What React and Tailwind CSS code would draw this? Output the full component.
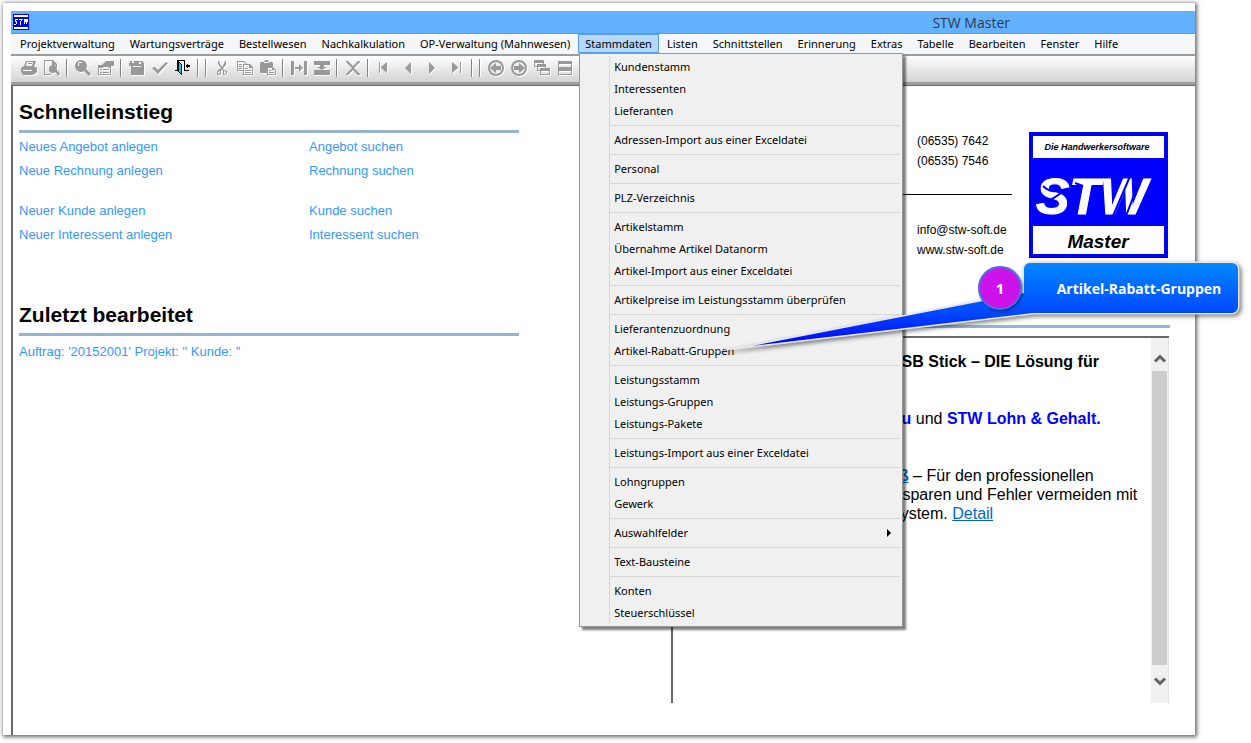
import { useState } from 'react'
import clsx from 'clsx'

const MENUS = [
  'Projektverwaltung', 'Wartungsverträge', 'Bestellwesen', 'Nachkalkulation',
  'OP-Verwaltung (Mahnwesen)', 'Stammdaten', 'Listen', 'Schnittstellen', 'Erinnerung',
  'Extras', 'Tabelle', 'Bearbeiten', 'Fenster', 'Hilfe',
]

const STAMMDATEN = [
  ['Kundenstamm', 'Interessenten', 'Lieferanten'],
  ['Adressen-Import aus einer Exceldatei'],
  ['Personal'],
  ['PLZ-Verzeichnis'],
  ['Artikelstamm', 'Übernahme Artikel Datanorm', 'Artikel-Import aus einer Exceldatei'],
  ['Artikelpreise im Leistungsstamm überprüfen'],
  ['Lieferantenzuordnung', 'Artikel-Rabatt-Gruppen'],
  ['Leistungsstamm', 'Leistungs-Gruppen', 'Leistungs-Pakete'],
  ['Leistungs-Import aus einer Exceldatei'],
  ['Lohngruppen', 'Gewerk'],
  ['Auswahlfelder'],
  ['Text-Bausteine'],
  ['Konten', 'Steuerschlüssel'],
]

const ICONS = {
  print: (
    <path fillRule="evenodd" d="M5 1h10l-2 6h2l1 1v4l-2 2h-1l-1 1H2l-2-3V8l3-2zM6 2L5 6h6l1-4zM7 3h4v1H7zM2 10v1h9v-1z" />
  ),
  preview: (
    <>
      <path fillRule="evenodd" d="M0 0h9l4 4v3h-1V5H8V1H1v13h6v1H0z" />
      <circle cx="9" cy="9" r="4" />
      <path d="M11 11l2-1 3 4-2 2z" />
    </>
  ),
  search: (
    <>
      <path fillRule="evenodd" d="M6 0a6 6 0 100 12A6 6 0 006 0zM4 2h3v1H4v3H3V3z" />
      <path d="M9 11l2-2 5 5-2 2z" />
    </>
  ),
  properties: (
    <path fillRule="evenodd" d="M0 5h4l4-4h8v5h-3v9H0zm1 3v6h11V8l-3-1H6L4 8zm1 1h2v1H2zm3 0h6v1H5zm-3 3h2v1H2zm3 0h6v1H5z" />
  ),
  save: (
    <path fillRule="evenodd" d="M1 1h2v2h2V1h8l2 2v12H2V6H0V3h1zm9 1v2h2V2zM4 6v1h8V6z" />
  ),
  check: <path d="M0 8l3-1 3 3 8-8 2 1L6 14z" />,
  cut: (
    <path fillRule="evenodd" d="M4 1h1l1 3 2 3 2-3 1-3h1v4L9 8l1 2 3 1v3l-2 1H9v-4L8 9l-1 2v3l-2 1H3v-3l1-2 2-1 1-1-3-4zM4 12v2l2-1v-2zm6-1v3h2v-2z" />
  ),
  copy: (
    <path fillRule="evenodd" d="M0 1h7l3 3h3l3 3v8H6v-4H0zm1 1v8h5V4h3L6 2zm6 3v9h8V8h-3V5zM2 4h3v1H2zm0 2h3v1H2zm0 2h3v1H2zm6 0h3v1H8zm0 2h6v1H8zm0 2h6v1H8z" />
  ),
  paste: (
    <path fillRule="evenodd" d="M0 3l1-1h3l1-2h3l1 2h3l1 1v4l3 3v5H7v-2H1l-1-1zm4 0h5V2H4zm4 5v6h7v-4h-3V8zm1 2h2v1H9zm0 2h5v1H9z" />
  ),
  indent: <path d="M0 1h3v14H0zM13 1h3v14h-3zM4 7h4V4l4 4-4 4V9H4z" />,
  merge: <path d="M0 1h16v4h-6v2h3l-5 3-5-3h3V5H0zM0 10h16v5H0z" />,
  remove: <path d="M1 1h2l5 5 5-5h2v1L9 8l6 6v1h-2L8 10l-5 5H1v-1l6-6-6-6z" />,
  first: <path d="M3 2h1v11H3zM11 2v11L5 8V7z" />,
  prev: <path d="M11 2v12L5 8z" />,
  next: <path d="M5 2v12l6-6z" />,
  last: <path d="M12 2h1v11h-1zM4 2v11l6-5V7z" />,
  back: (
    <>
      <circle cx="8" cy="8" r="8" />
      <circle cx="8" cy="8" r="6" fill="#ededed" />
      <path d="M2 8l6-5v3h5v4H8v3z" />
    </>
  ),
  forward: (
    <>
      <circle cx="8" cy="8" r="8" />
      <circle cx="8" cy="8" r="6" fill="#ededed" />
      <path d="M14 8L8 3v3H3v4h5v3z" />
    </>
  ),
  cascade: (
    <path fillRule="evenodd" d="M0 0h10v4h2v4h4v7H6v-4H3V7H0zm1 3v3h2V4h6V3zm3 4v3h2V8h5V7zm3 4v3h8v-3z" />
  ),
  tile: <path fillRule="evenodd" d="M1 1h14v14H1zm1 3v3h12V4zm0 7v3h12v-3z" />,
  split: <path fillRule="evenodd" d="M1 1h6v14H1zm1 3v10h4V4zM9 1h6v14H9zm1 3v10h4V4z" />,
}

const TOOLS = [
  ['print', 'preview'],
  ['search', 'properties'],
  ['save', 'check', 'door'],
  [],
  ['cut', 'copy', 'paste'],
  ['indent', 'merge'],
  ['remove'],
  ['first', 'prev', 'next', 'last'],
  [],
  ['back', 'forward', 'cascade', 'tile', 'split'],
]

function DoorIcon() {
  return (
    <svg width="16" height="16" viewBox="0 0 16 16" shapeRendering="crispEdges">
      <path fill="#fff" d="M2 1h7v10H2z" />
      <path d="M2 0h8v11H9V1H3v10H2zM0 10h3v1H0zM9 10h5v1H9z" />
      <path fill="#00d8e8" stroke="#000" d="M3.500 1.500l3 3v10l-3-3z" />
      <path d="M10 6l3-3v2h2v2h-2v2z" />
    </svg>
  )
}

function ToolButton({ name }) {
  const isNav = ['first', 'prev', 'next', 'last'].includes(name)
  return (
    <button aria-label={name} className={clsx('flex h-6 items-center justify-center', isNav ? 'w-6' : 'w-[23px]')}>
      {name === 'door' ? (
        <DoorIcon />
      ) : (
        <svg width="16" height="16" viewBox="0 0 16 16" fill="#999" className="drop-shadow-[1px_1px_0_#fff]">
          {ICONS[name]}
        </svg>
      )}
    </button>
  )
}

function AppIcon() {
  return (
    <svg width="16" height="16" viewBox="0 0 16 16" shapeRendering="crispEdges">
      <path fill="#0000e6" d="M0 0h16v16H0z" />
      <path fill="#fff" d="M1 1h14v2H1zM1 13h14v2H1z" />
      <path stroke="#fff" fill="none" d="M5 5.500H3L2 7l2 1-1 2H1M6 5.500h4M8.500 5L7 11M11 5v5l2-5v5l2-5" />
    </svg>
  )
}

function Logo() {
  return (
    <svg width="139" height="126" viewBox="0 0 139 126" className="mt-px shrink-0" role="img" aria-label="STW Master">
      <path fill="#00f" d="M0 0h139v126H0z" />
      <path fill="#fff" d="M4 4h131v22H4zM4 94h131v28H4z" />
      <g fontFamily="Liberation Sans, Arial, sans-serif" fontWeight="700" fontStyle="italic">
        <text x="68" y="18" fontSize="9" textAnchor="middle">Die Handwerkersoftware</text>
        <text x="7" y="82" fontSize="50" fill="#fff" stroke="#fff">STW</text>
        <text x="69" y="116" fontSize="19" textAnchor="middle">Master</text>
      </g>
      <path stroke="#00f" strokeWidth="2" fill="none" d="M8 69c10 2 16-2 24-8M14 54c6 6 12 6 22 4M46 51l8 3M84 84l18-42M97 84l16-42" />
    </svg>
  )
}

function Dropdown() {
  return (
    <div
      role="menu"
      className="absolute left-px top-full z-10 w-[324px] border border-[#979797] bg-[#f0f0f0] py-0.5 shadow-[3px_3px_2px_#00000080]"
    >
      {STAMMDATEN.map((group, i) => (
        <div key={group[0]} className="ml-[29px] mr-0.5 border-l border-[#d7d7d7]">
          {i > 0 && <div className="flex h-[7px] items-center"><div className="h-px w-full bg-[#d7d7d7]" /></div>}
          {group.map(item => (
            <button
              key={item}
              role="menuitem"
              className="flex h-[22px] w-full items-center justify-between whitespace-nowrap pl-1 pr-2 text-left"
            >
              {item}
              {item === 'Auswahlfelder' && (
                <svg width="5" height="8" viewBox="0 0 5 8"><path d="M0 0l4 4-4 4z" /></svg>
              )}
            </button>
          ))}
        </div>
      ))}
    </div>
  )
}

function MenuBar() {
  const [open, setOpen] = useState('Stammdaten')
  return (
    <nav className="flex h-5 items-start gap-px bg-[#f5f6f7] pl-0.5 font-['Noto_Sans','Open_Sans',sans-serif] text-[11px] text-black">
      {MENUS.map(name => (
        <div key={name} className="relative">
          <button
            onClick={() => setOpen(open === name ? null : name)}
            className={clsx(
              'block h-[19px] whitespace-nowrap border px-[6px] pt-px',
              open === name ? 'border-[#569de5] bg-[#b5d7fb]' : 'border-transparent',
            )}
          >
            {name}
          </button>
          {open === name && name === 'Stammdaten' && <Dropdown />}
        </div>
      ))}
    </nav>
  )
}

function Toolbar() {
  return (
    <div className="flex h-[31px] items-center border-b-[3px] border-t-2 border-[#9c9c9c] bg-linear-to-b from-white to-[#d3d3d3] pb-0.5 pl-[6px]">
      {TOOLS.map((group, i) => (
        <div key={i} className="flex items-center">
          {i > 0 && <div className="mx-[3px] h-[18px] w-0.5 border-r border-white bg-[#858585]" />}
          {group.map(name => <ToolButton key={name} name={name} />)}
        </div>
      ))}
    </div>
  )
}

function Heading({ children }) {
  return <h2 className="border-b-[3px] border-[#99b4d1] pb-1.5 text-[21px] leading-6 font-bold text-black">{children}</h2>
}

function QuickStart() {
  return (
    <section>
      <Heading>Schnelleinstieg</Heading>
      <div className="mt-0.5 grid grid-cols-[290px_1fr] text-[13px] leading-6 text-[#3399ff]">
        <a href="#angebot">Neues Angebot anlegen</a>
        <a href="#angebote">Angebot suchen</a>
        <a href="#rechnung">Neue Rechnung anlegen</a>
        <a href="#rechnungen">Rechnung suchen</a>
        <a href="#kunde" className="mt-4">Neuer Kunde anlegen</a>
        <a href="#kunden" className="mt-4">Kunde suchen</a>
        <a href="#interessent">Neuer Interessent anlegen</a>
        <a href="#interessenten">Interessent suchen</a>
      </div>
    </section>
  )
}

function Recent() {
  return (
    <section>
      <Heading>Zuletzt bearbeitet</Heading>
      <a href="#auftrag" className="mt-1 block text-[13px] leading-6 text-[#3399ff]">
        Auftrag: '20152001' Projekt: '' Kunde: ''
      </a>
    </section>
  )
}

function Contact() {
  return (
    <div className="flex h-[197px] justify-end gap-[17px] border-b-[3px] border-[#99b4d1] pr-0.5">
      <div className="w-[120px] text-[12px] leading-5 text-black">
        <p className="pl-[25px]">(06535) 7642<br />(06535) 7546</p>
        <p className="mt-[23px] border-t border-black pl-[25px] pt-[25px]">info@stw-soft.de<br />www.stw-soft.de</p>
      </div>
      <Logo />
    </div>
  )
}

function News() {
  return (
    <div className="mr-px mt-2 flex h-[367px] border-l-2 border-t-2 border-[#696969] text-[16px] leading-[19px] text-black">
      <div className="flex-1 overflow-hidden whitespace-nowrap pl-[217px] pt-[14px]">
        <p className="mb-[38px] font-bold">USB Stick – DIE Lösung für</p>
        <p className="mb-[38px]">
          <b className="text-[#0000ff]">Bu</b> und <b className="text-[#0000ff]">STW Lohn &amp; Gehalt.</b>
        </p>
        <p>
          <a href="#aufmass" className="font-bold text-[#0066cc] underline">aß</a> – Für den professionellen
          <br />
          it sparen und Fehler vermeiden mit
          <br />
          System. <a href="#detail" className="text-[#0066cc] underline">Detail</a>
        </p>
      </div>
      <div className="flex w-[18px] flex-col items-center border-r border-[#e3e3e3] bg-[#f0f0f0]">
        <button aria-label="Nach oben" className="flex h-[33px] items-end pb-2">
          <svg width="12" height="9" viewBox="0 0 12 9" fill="none" stroke="#606060" strokeWidth="3"><path d="M1 7.500L6 2.500l5 5" /></svg>
        </button>
        <div className="h-[294px] w-[15px] bg-[#cdcdcd]" />
        <button aria-label="Nach unten" className="flex flex-1 items-start pt-3">
          <svg width="12" height="9" viewBox="0 0 12 9" fill="none" stroke="#606060" strokeWidth="3"><path d="M1 1.500l5 5 5-5" /></svg>
        </button>
      </div>
    </div>
  )
}

function Callout() {
  const shape = 'M1030 263H1232a6 6 0 016 6V307a6 6 0 01-6 6H1033L752 346 1024 293V269a6 6 0 016-6z'
  return (
    <svg
      width="1251"
      height="400"
      viewBox="0 0 1251 400"
      className="pointer-events-none absolute left-0 top-0 z-20"
    >
      <defs>
        <linearGradient id="callout" gradientUnits="userSpaceOnUse" x1="0" y1="263" x2="0" y2="346">
          <stop offset="0" stopColor="#0088ff" />
          <stop offset="0.6" stopColor="#0048ff" />
          <stop offset="1" stopColor="#0000ff" />
        </linearGradient>
      </defs>
      <path
        d={shape}
        fill="#d8d8d8"
        stroke="#e6e6e6"
        strokeWidth="3"
        strokeMiterlimit="30"
        className="drop-shadow-[2px_2px_2px_#00000080]"
      />
      <path d={shape} fill="url(#callout)" />
      <circle cx="1000" cy="288" r="21" fill="#cc14ea" stroke="#4f6fe0" strokeWidth="2" className="drop-shadow-[1px_1px_1px_#00000080]" />
      <g fill="#fff" fontFamily="Open Sans, Noto Sans, sans-serif" fontWeight="700" textAnchor="middle">
        <text x="1000" y="294" fontSize="15">1</text>
        <text x="1139" y="294" fontSize="14">Artikel-Rabatt-Gruppen</text>
      </g>
    </svg>
  )
}

export default function App() {
  return (
    <div className="relative flex min-h-screen flex-col overflow-hidden bg-white pb-2 pl-[3px] pr-14 pt-[3px] font-['Liberation_Sans',Arial,sans-serif]">
      <div className="flex flex-1 flex-col bg-white pl-2 pt-2 shadow-[1px_1px_4px_1px_#00000099]">
        <header className="flex h-[23px] items-center justify-between border-b border-[#569de5] bg-[#64b1ff] pl-0.5 pr-[185px]">
          <AppIcon />
          <h1 className="font-['Open_Sans','Noto_Sans',sans-serif] text-[14px] text-[#2b3b4c]">STW Master</h1>
        </header>
        <MenuBar />
        <Toolbar />
        <main className="grid flex-1 grid-cols-[500fr_499fr] gap-x-[152px] border-l-2 border-t border-[#696969] pl-[6px] pr-[25px]">
          <div className="flex flex-col gap-14 pt-[14px]">
            <QuickStart />
            <Recent />
          </div>
          <div className="pt-[45px]">
            <Contact />
            <News />
          </div>
        </main>
      </div>
      <Callout />
    </div>
  )
}
